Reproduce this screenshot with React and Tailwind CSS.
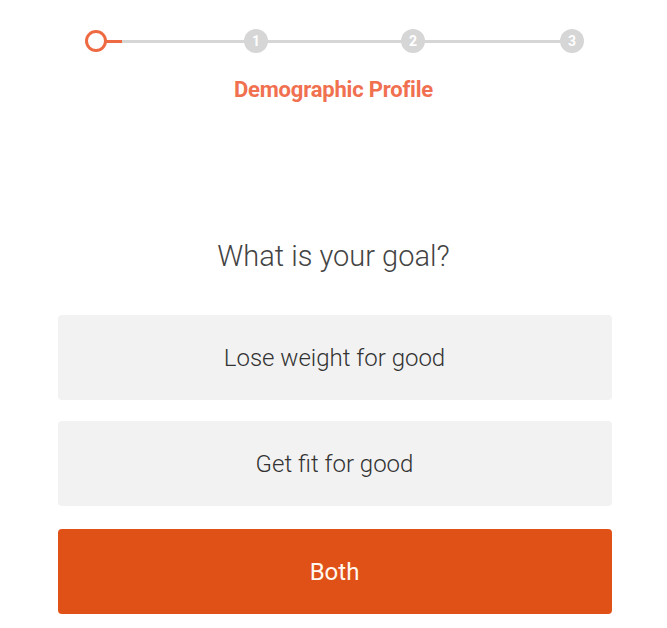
export default function App() {
  const steps = [
    { n: "1", left: "left-[244px]" },
    { n: "2", left: "left-[401px]" },
    { n: "3", left: "left-[560px]" },
  ];
  return (
    <div className="w-[667px] h-[628px] bg-white font-['Roboto',sans-serif] flex flex-col items-center">
      {/* Stepper */}
      <div className="relative w-full h-[28px] mt-[27px]">
        <div className="absolute left-[107px] w-[465px] top-[13px] h-[3px] bg-[#d6d6d6]" />
        <div className="absolute left-[104px] w-[18px] top-[13px] h-[3px] bg-[#ee6a43]" />
        <div className="absolute left-[85px] top-[3px] w-[22px] h-[22px] rounded-full border-[3px] border-[#ee6a43] bg-white" />
        {steps.map((s) => (
          <div
            key={s.n}
            className={`absolute top-[2px] w-[24px] h-[24px] rounded-full bg-[#d6d6d6] text-white text-[14px] font-bold flex items-center justify-center ${s.left}`}
          >
            {s.n}
          </div>
        ))}
      </div>
      <div className="mt-[18px] leading-[33px] text-[22px] font-bold text-[#f07050] tracking-[-0.2px]">Demographic Profile</div>

      <div className="mt-[128px] leading-[44px] text-[29px] font-light text-[#444]">What is your goal?</div>

      <div className="mt-[37px] ml-[2px] w-[554px] flex flex-col">
        <button className="h-[85px] rounded bg-[#f2f2f2] text-[24px] font-light text-[#333]">Lose weight for good</button>
        <button className="h-[85px] mt-[21px] rounded bg-[#f2f2f2] text-[24px] font-light text-[#333]">Get fit for good</button>
        <button className="h-[85px] mt-[23px] rounded bg-[#e05117] text-[24px] font-normal text-[#fff8f0]">Both</button>
      </div>
    </div>
  );
}
